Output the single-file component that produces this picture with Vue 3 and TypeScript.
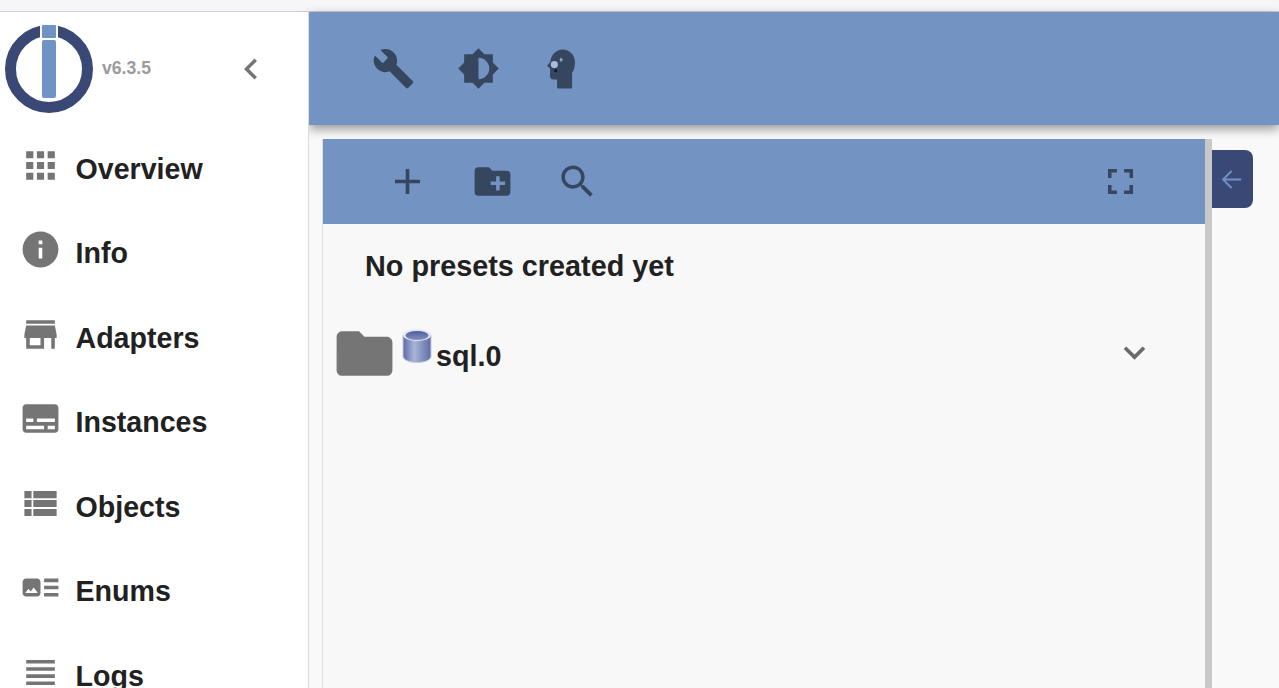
<template>
  <div class="page">
    <div class="browser-strip"></div>
    <div class="layout">
      <aside class="sidebar">
        <div class="brand">
          <svg class="logo" viewBox="0 0 90 90">
            <circle cx="45" cy="45" r="38.5" fill="none" stroke="#3a4875" stroke-width="11" />
            <rect x="36" y="0" width="18" height="40" fill="#fff" />
            <rect x="38" y="1" width="14" height="13" rx="1" fill="#7093c5" />
            <rect x="38" y="16" width="14" height="58" rx="2" fill="#7093c5" />
          </svg>
          <span class="version">v6.3.5</span>
          <svg class="collapse" viewBox="0 0 24 24"><path d="M15.41 7.41L14 6l-6 6 6 6 1.41-1.41L10.83 12z" /></svg>
        </div>
        <nav>
          <div v-for="item in navItems" :key="item.label" class="nav-item">
            <svg class="nav-icon" viewBox="0 0 24 24"><path :d="item.icon" /></svg>
            <span>{{ item.label }}</span>
          </div>
        </nav>
      </aside>

      <main class="main">
        <header class="topbar">
          <button class="icon-btn">
            <svg viewBox="0 0 24 24"><path d="M22.7 19l-9.1-9.1c.9-2.3.4-5-1.5-6.9-2-2-5-2.4-7.4-1.3L9 6 6 9 1.6 4.7C.4 7.1.9 10.1 2.9 12.1c1.9 1.9 4.6 2.4 6.9 1.5l9.1 9.1c.4.4 1 .4 1.4 0l2.3-2.3c.5-.4.5-1.1.1-1.4z" /></svg>
          </button>
          <button class="icon-btn">
            <svg viewBox="0 0 24 24"><path d="M20 15.31L23.31 12 20 8.69V4h-4.69L12 .69 8.69 4H4v4.69L.69 12 4 15.31V20h4.69L12 23.31 15.31 20H20v-4.69zM12 18V6c3.31 0 6 2.69 6 6s-2.69 6-6 6z" /></svg>
          </button>
          <button class="icon-btn">
            <svg viewBox="0 0 24 24">
              <path d="M11.6 1.4C7.8 1.4 4.8 4.500 4.700 8.400L2.800 10.500 4.500 12v4.500c0 1 .8 1.700 1.700 1.700h2.200v4.100c0 .5.4.9.9.9H16c.5 0 .8-.4.8-.9v-7.900c1.100-1.400 1.600-3.500 1.600-5.900 0-4-3-7.100-6.800-7.100z" />
              <circle cx="6.900" cy="9.800" r="2" fill="#a9bcdc" />
              <path d="M9.900 6.800h.4v-.8h.6v.8h.8v.6h-.8v.8h-.6v-.8h-.4z" fill="#a9bcdc" />
              <circle cx="7.650" cy="13.200" r="0.900" fill="#111a2b" />
            </svg>
          </button>
        </header>

        <section class="content">
          <div class="panel">
            <div class="panel-toolbar">
              <button class="icon-btn">
                <svg viewBox="0 0 24 24"><path d="M19 13h-6v6h-2v-6H5v-2h6V5h2v6h6v2z" /></svg>
              </button>
              <button class="icon-btn">
                <svg viewBox="0 0 24 24"><path d="M20 6h-8l-2-2H4c-1.110 0-1.990.89-1.990 2L2 18c0 1.110.89 2 2 2h16c1.110 0 2-.89 2-2V8c0-1.110-.89-2-2-2zm-1 8h-3v3h-2v-3h-3v-2h3V9h2v3h3v2z" /></svg>
              </button>
              <button class="icon-btn">
                <svg viewBox="0 0 24 24"><path d="M15.500 14h-.79l-.28-.27C15.410 12.590 16 11.110 16 9.500 16 5.910 13.090 3 9.500 3S3 5.910 3 9.500 5.910 16 9.500 16c1.610 0 3.090-.59 4.230-1.570l.27.28v.79l5 4.990L20.490 19l-4.990-5zm-6 0C7.010 14 5 11.990 5 9.500S7.010 5 9.500 5 14 7.010 14 9.500 11.990 14 9.500 14z" /></svg>
              </button>
              <button class="icon-btn fullscreen">
                <svg viewBox="0 0 24 24"><path d="M7 14H5v5h5v-2H7v-3zm-2-4h2V7h3V5H5v5zm12 7h-3v2h5v-5h-2v3zM14 5v2h3v3h2V5h-5z" /></svg>
              </button>
            </div>
            <p class="empty">No presets created yet</p>
            <div class="tree-row">
              <svg class="folder" viewBox="0 0 24 24"><path d="M10 4H4c-1.100 0-1.990.9-1.990 2L2 18c0 1.100.9 2 2 2h16c1.100 0 2-.9 2-2V8c0-1.100-.9-2-2-2h-8l-2-2z" /></svg>
              <svg class="db" viewBox="0 0 30 36">
                <defs>
                  <linearGradient id="dbBody" x1="0" x2="1" y1="0" y2="0">
                    <stop offset="0" stop-color="#5a6ba6" />
                    <stop offset="0.4" stop-color="#a9b6d8" />
                    <stop offset="1" stop-color="#5d6da6" />
                  </linearGradient>
                  <linearGradient id="dbTop" x1="0" x2="0" y1="0" y2="1">
                    <stop offset="0" stop-color="#4b5d9c" />
                    <stop offset="1" stop-color="#8493c0" />
                  </linearGradient>
                </defs>
                <path d="M1 7v21c0 4 6 6.500 14 6.500s14-2.500 14-6.500V7z" fill="url(#dbBody)" stroke="#c5cbdd" stroke-width="1" />
                <ellipse cx="15" cy="7" rx="14" ry="6" fill="#e3e7f2" />
                <ellipse cx="15" cy="7.500" rx="11.500" ry="4.500" fill="url(#dbTop)" />
              </svg>
              <span class="tree-label">sql.0</span>
              <svg class="expand" viewBox="0 0 24 24"><path d="M16.590 8.590L12 13.170 7.410 8.590 6 10l6 6 6-6z" /></svg>
            </div>
          </div>
          <div class="scrollbar"></div>
          <div class="side-tab">
            <svg viewBox="0 0 24 24"><path d="M20 11.200H6.900l5.700-5.700-1.100-1.100L3.900 12l7.600 7.600 1.100-1.100-5.700-5.700H20z" /></svg>
          </div>
        </section>
      </main>
    </div>
  </div>
</template>

<script setup lang="ts">
interface NavItem {
  label: string
  icon: string
}

const navItems: NavItem[] = [
  { label: 'Overview', icon: 'M4 8h4V4H4v4zm6 12h4v-4h-4v4zm-6 0h4v-4H4v4zm0-6h4v-4H4v4zm6 0h4v-4h-4v4zm6-10v4h4V4h-4zm-6 4h4V4h-4v4zm6 6h4v-4h-4v4zm0 6h4v-4h-4v4z' },
  { label: 'Info', icon: 'M12 2C6.480 2 2 6.480 2 12s4.480 10 10 10 10-4.480 10-10S17.520 2 12 2zm1 15h-2v-6h2v6zm0-8h-2V7h2v2z' },
  { label: 'Adapters', icon: 'M20 4H4v2h16V4zm1 10v-2l-1-5H4l-1 5v2h1v6h10v-6h4v6h2v-6h1zm-9 4H6v-4h6v4z' },
  { label: 'Instances', icon: 'M20 4H4c-1.100 0-2 .9-2 2v12c0 1.100.9 2 2 2h16c1.100 0 2-.9 2-2V6c0-1.100-.9-2-2-2zM4 12h4v2H4v-2zm10 6H4v-2h10v2zm6 0h-4v-2h4v2zm0-4H10v-2h10v2z' },
  { label: 'Objects', icon: 'M3 14h4v-4H3v4zm0 5h4v-4H3v4zM3 9h4V5H3v4zm5 5h13v-4H8v4zm0 5h13v-4H8v4zM8 5v4h13V5H8z' },
  { label: 'Enums', icon: 'M22 13h-8v-2h8v2zm0-6h-8v2h8V7zm-8 10h8v-2h-8v2zm-2-8v6c0 1.100-.9 2-2 2H4c-1.100 0-2-.9-2-2V9c0-1.100.9-2 2-2h6c1.100 0 2 .9 2 2zm-1.500 6l-2.250-3-1.750 2.260-1.250-1.510L3.500 15h7z' },
  { label: 'Logs', icon: 'M4 15h16v-2H4v2zm0 4h16v-2H4v2zm0-8h16V9H4v2zm0-6v2h16V5H4z' },
]
</script>

<style>
html,
body {
  margin: 0;
  overflow: hidden;
}
</style>

<style scoped>
.page {
  display: flex;
  flex-direction: column;
  height: 688px;
  overflow: hidden;
  font-family: 'Liberation Sans', Arial, sans-serif;
  color: #212121;
}

.browser-strip {
  height: 11px;
  flex: none;
  background: #f6f6f9;
  border-bottom: 1px solid #cfcfd3;
}

.layout {
  display: flex;
  flex: 1;
  min-height: 0;
}

.sidebar {
  width: 308px;
  flex: none;
  background: #fff;
  border-right: 1px solid #dcdcdc;
  overflow: hidden;
  position: relative;
  z-index: 1;
}

.brand {
  display: flex;
  align-items: center;
  height: 115.2px;
  padding-left: 4px;
}

.logo {
  width: 90px;
  height: 90px;
  flex: none;
  margin-bottom: 2px;
}

.version {
  margin-left: 8px;
  margin-bottom: 2px;
  font-size: 17.6px;
  font-weight: 700;
  color: #9b9b9b;
}

.collapse {
  width: 42px;
  height: 42px;
  margin-left: 79px;
  margin-bottom: 2px;
  fill: #757575;
}

.nav-item {
  display: flex;
  align-items: center;
  height: 84.5px;
  padding-left: 18.5px;
  font-size: 28.6px;
  font-weight: 700;
}

.nav-icon {
  width: 43px;
  height: 43px;
  flex: none;
  margin-right: 14px;
  margin-bottom: 8px;
  fill: #757575;
}

.main {
  flex: 1;
  min-width: 0;
  display: flex;
  flex-direction: column;
  background: #f9f9f9;
}

.topbar {
  display: flex;
  align-items: center;
  height: 113px;
  flex: none;
  padding-left: 42px;
  background: #7393c3;
  box-shadow: 0 4px 10px rgba(0, 0, 0, 0.4);
  position: relative;
}

.icon-btn {
  display: flex;
  align-items: center;
  justify-content: center;
  width: 85px;
  height: 85px;
  padding: 0;
  border: none;
  background: none;
}

.icon-btn svg {
  width: 43px;
  height: 43px;
  fill: #37465f;
}

.content {
  display: flex;
  align-items: flex-start;
  flex: 1;
  min-height: 0;
  padding: 14px 0 0 13px;
}

.panel {
  width: 883px;
  height: 549px;
  flex: none;
  box-sizing: border-box;
  border-left: 1px solid #e0e0e0;
  background: #f8f8f8;
}

.panel-toolbar {
  display: flex;
  align-items: center;
  height: 85px;
  padding: 0 42px 0 42px;
  background: #7393c3;
}

.fullscreen {
  margin-left: auto;
}

.empty {
  margin: 23px 0 0 42px;
  font-size: 28.8px;
  font-weight: 700;
  line-height: 38px;
}

.tree-row {
  display: flex;
  align-items: center;
  height: 60px;
  margin-top: 38px;
  padding-left: 8px;
  position: relative;
}

.folder {
  width: 67px;
  height: 67px;
  flex: none;
  fill: #757575;
}

.db {
  width: 30px;
  height: 36px;
  flex: none;
  margin: -14px 4px 0 4px;
}

.tree-label {
  font-size: 28.7px;
  font-weight: 700;
  margin-top: 6px;
}

.expand {
  position: absolute;
  left: 790px;
  top: 8px;
  width: 43px;
  height: 43px;
  fill: #6a6a6a;
}

.scrollbar {
  width: 7px;
  height: 549px;
  flex: none;
  background: #c8c8c8;
}

.side-tab {
  display: flex;
  align-items: center;
  justify-content: center;
  width: 41px;
  height: 58px;
  flex: none;
  margin-top: 11px;
  box-sizing: border-box;
  padding-right: 2px;
  background: #3a4875;
  border-radius: 0 8px 8px 0;
}

.side-tab svg {
  width: 29px;
  height: 29px;
  fill: #7093c5;
}
</style>
